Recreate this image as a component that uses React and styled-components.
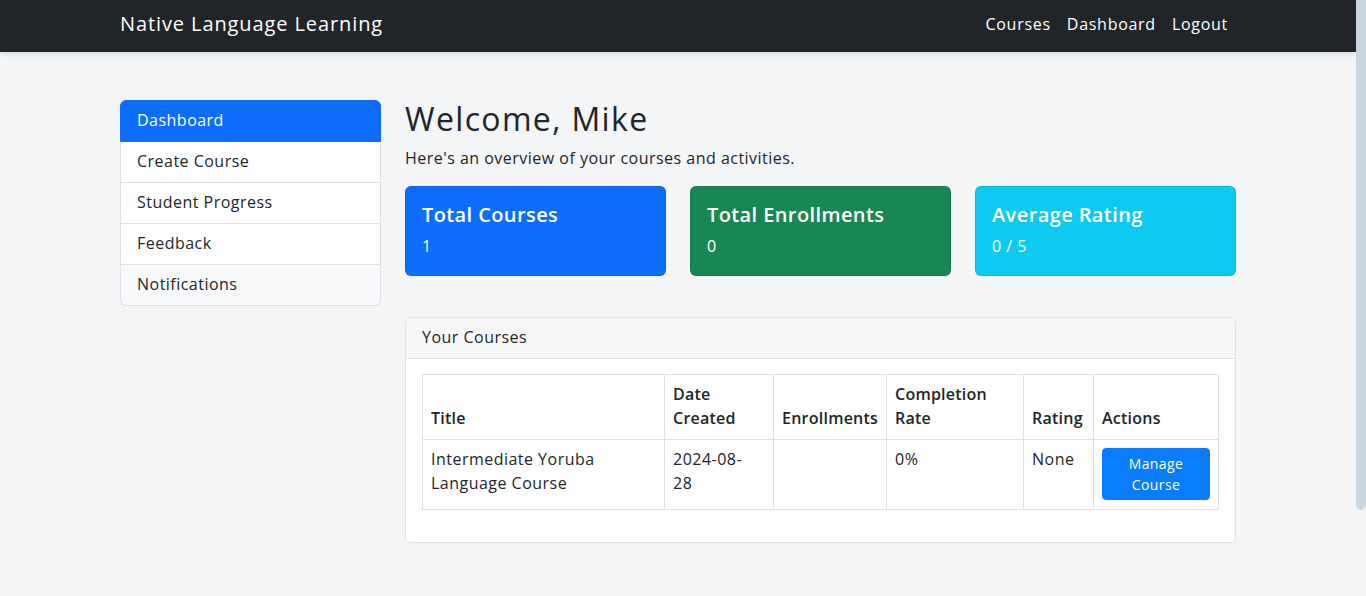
import React from 'react';
import styled, { createGlobalStyle } from 'styled-components';

const GlobalStyle = createGlobalStyle`
  html, body {
    margin: 0;
    padding: 0;
  }
  body {
    background: #f4f5f7;
    color: #212529;
    font-family: "Open Sans", "Liberation Sans", sans-serif;
    font-size: 16px;
    line-height: 1.5;
    letter-spacing: 0.03em;
    overflow: hidden;
  }
  * { box-sizing: border-box; }
`;

const Page = styled.div`
  width: calc(100% - 10px);
  min-height: 596px;
`;

const ScrollThumb = styled.div`
  position: fixed;
  top: 0;
  right: 0;
  width: 10px;
  height: 510px;
  background: #cbd5df;
  border-radius: 0 0 5px 5px;
`;

const Navbar = styled.nav`
  background: #212529;
  height: 52px;
  box-shadow: 0 2px 6px rgba(0, 0, 0, 0.12);
`;

const Container = styled.div`
  width: 1140px;
  margin: 0 auto;
  padding: 0 12px;
`;

const NavInner = styled(Container)`
  height: 100%;
  display: flex;
  align-items: center;
  justify-content: space-between;
  padding-bottom: 4px;
`;

const Brand = styled.a`
  color: #fff;
  font-size: 20px;
  text-decoration: none;
  letter-spacing: 0.045em;
`;

const NavLinks = styled.div`
  display: flex;
`;

const NavLink = styled.a`
  color: #fff;
  text-decoration: none;
  padding: 0 8px;
  font-size: 16px;
  letter-spacing: 0.045em;
`;

const Main = styled(Container)`
  margin-top: 48px;
  display: grid;
  grid-template-columns: 261px 1fr;
  column-gap: 24px;
  align-items: start;
`;

const SideList = styled.div`
  display: flex;
  flex-direction: column;
`;

const SideItem = styled.a`
  display: block;
  padding: 8px 16px 10px;
  line-height: 22px;
  text-decoration: none;
  color: ${p => (p.$active ? '#fff' : '#212529')};
  background: ${p => (p.$active ? '#0d6efd' : p.$muted ? '#f8f9fa' : '#fff')};
  border: 1px solid ${p => (p.$active ? '#0d6efd' : '#dee2e6')};
  & + & { border-top-width: 0; }
  &:first-child { border-radius: 6px 6px 0 0; }
  &:last-child { border-radius: 0 0 6px 6px; }
`;

const Title = styled.h2`
  margin: 0 0 8px;
  font-size: 32px;
  font-weight: 500;
  line-height: 1.2;
  letter-spacing: 0.042em;
`;

const Lead = styled.p`
  margin: 0 0 16px;
`;

const StatRow = styled.div`
  display: grid;
  grid-template-columns: repeat(3, 1fr);
  column-gap: 24px;
  margin-bottom: 41px;
`;

const StatCard = styled.div`
  background: ${p => p.$bg};
  border: 1px solid rgba(0, 0, 0, 0.1);
  border-radius: 6px;
  color: #fff;
  padding: 16px;
`;

const StatTitle = styled.h5`
  margin: 0 0 8px;
  font-size: 20px;
  font-weight: 600;
  line-height: 1.2;
  letter-spacing: 0.02em;
`;

const StatValue = styled.p`
  margin: 0;
  font-weight: 500;
  line-height: 22px;
  padding-bottom: 2px;
`;

const Card = styled.div`
  background: #fff;
  border: 1px solid #dee2e6;
  border-radius: 6px;
  overflow: hidden;
`;

const CardHeader = styled.div`
  background: #f7f7f8;
  border-bottom: 1px solid #dee2e6;
  padding: 7px 16px 9px;
`;

const CardBody = styled.div`
  padding: 15px 16px 16px;
`;

const Table = styled.table`
  width: 100%;
  border-collapse: collapse;
  table-layout: fixed;
  margin-bottom: 16px;
  th, td {
    border: 1px solid #dee2e6;
    padding: 7px 8px 9px;
    text-align: left;
  }
  th {
    font-weight: 600;
    vertical-align: bottom;
    letter-spacing: 0.015em;
  }
  td {
    vertical-align: top;
  }
`;

const NarrowText = styled.span`
  display: block;
  max-width: ${p => p.$max}px;
`;

const ManageButton = styled.button`
  display: block;
  width: 100%;
  margin-top: 1px;
  background: #0a7cff;
  color: #fff;
  border: 1px solid #0a7cff;
  border-radius: 4px;
  padding: 4px 8px;
  font-family: inherit;
  font-size: 14px;
  line-height: 1.5;
  letter-spacing: 0.03em;
`;

const stats = [
  { title: 'Total Courses', value: '1', bg: '#0d6efd' },
  { title: 'Total Enrollments', value: '0', bg: '#198754' },
  { title: 'Average Rating', value: '0 / 5', bg: '#0dcaf0' },
];

const sideItems = ['Dashboard', 'Create Course', 'Student Progress', 'Feedback', 'Notifications'];

export default function App() {
  return (
    <Page>
      <GlobalStyle />
      <ScrollThumb />
      <Navbar>
        <NavInner>
          <Brand href="#">Native Language Learning</Brand>
          <NavLinks>
            <NavLink href="#">Courses</NavLink>
            <NavLink href="#">Dashboard</NavLink>
            <NavLink href="#">Logout</NavLink>
          </NavLinks>
        </NavInner>
      </Navbar>
      <Main>
        <SideList>
          {sideItems.map((item, i) => (
            <SideItem key={item} href="#" $active={i === 0} $muted={i === sideItems.length - 1}>
              {item}
            </SideItem>
          ))}
        </SideList>
        <div>
          <Title>Welcome, Mike</Title>
          <Lead>Here's an overview of your courses and activities.</Lead>
          <StatRow>
            {stats.map(s => (
              <StatCard key={s.title} $bg={s.bg}>
                <StatTitle>{s.title}</StatTitle>
                <StatValue>{s.value}</StatValue>
              </StatCard>
            ))}
          </StatRow>
          <Card>
            <CardHeader>Your Courses</CardHeader>
            <CardBody>
              <Table>
                <colgroup>
                  <col style={{ width: 242 }} />
                  <col style={{ width: 109 }} />
                  <col style={{ width: 113 }} />
                  <col style={{ width: 137 }} />
                  <col style={{ width: 70 }} />
                  <col style={{ width: 125 }} />
                </colgroup>
                <thead>
                  <tr>
                    <th>Title</th>
                    <th>Date Created</th>
                    <th>Enrollments</th>
                    <th>Completion Rate</th>
                    <th>Rating</th>
                    <th>Actions</th>
                  </tr>
                </thead>
                <tbody>
                  <tr>
                    <td>Intermediate Yoruba Language Course</td>
                    <td><NarrowText $max={80}>2024-08-28</NarrowText></td>
                    <td></td>
                    <td>0%</td>
                    <td>None</td>
                    <td>
                      <ManageButton>Manage Course</ManageButton>
                    </td>
                  </tr>
                </tbody>
              </Table>
            </CardBody>
          </Card>
        </div>
      </Main>
    </Page>
  );
}
